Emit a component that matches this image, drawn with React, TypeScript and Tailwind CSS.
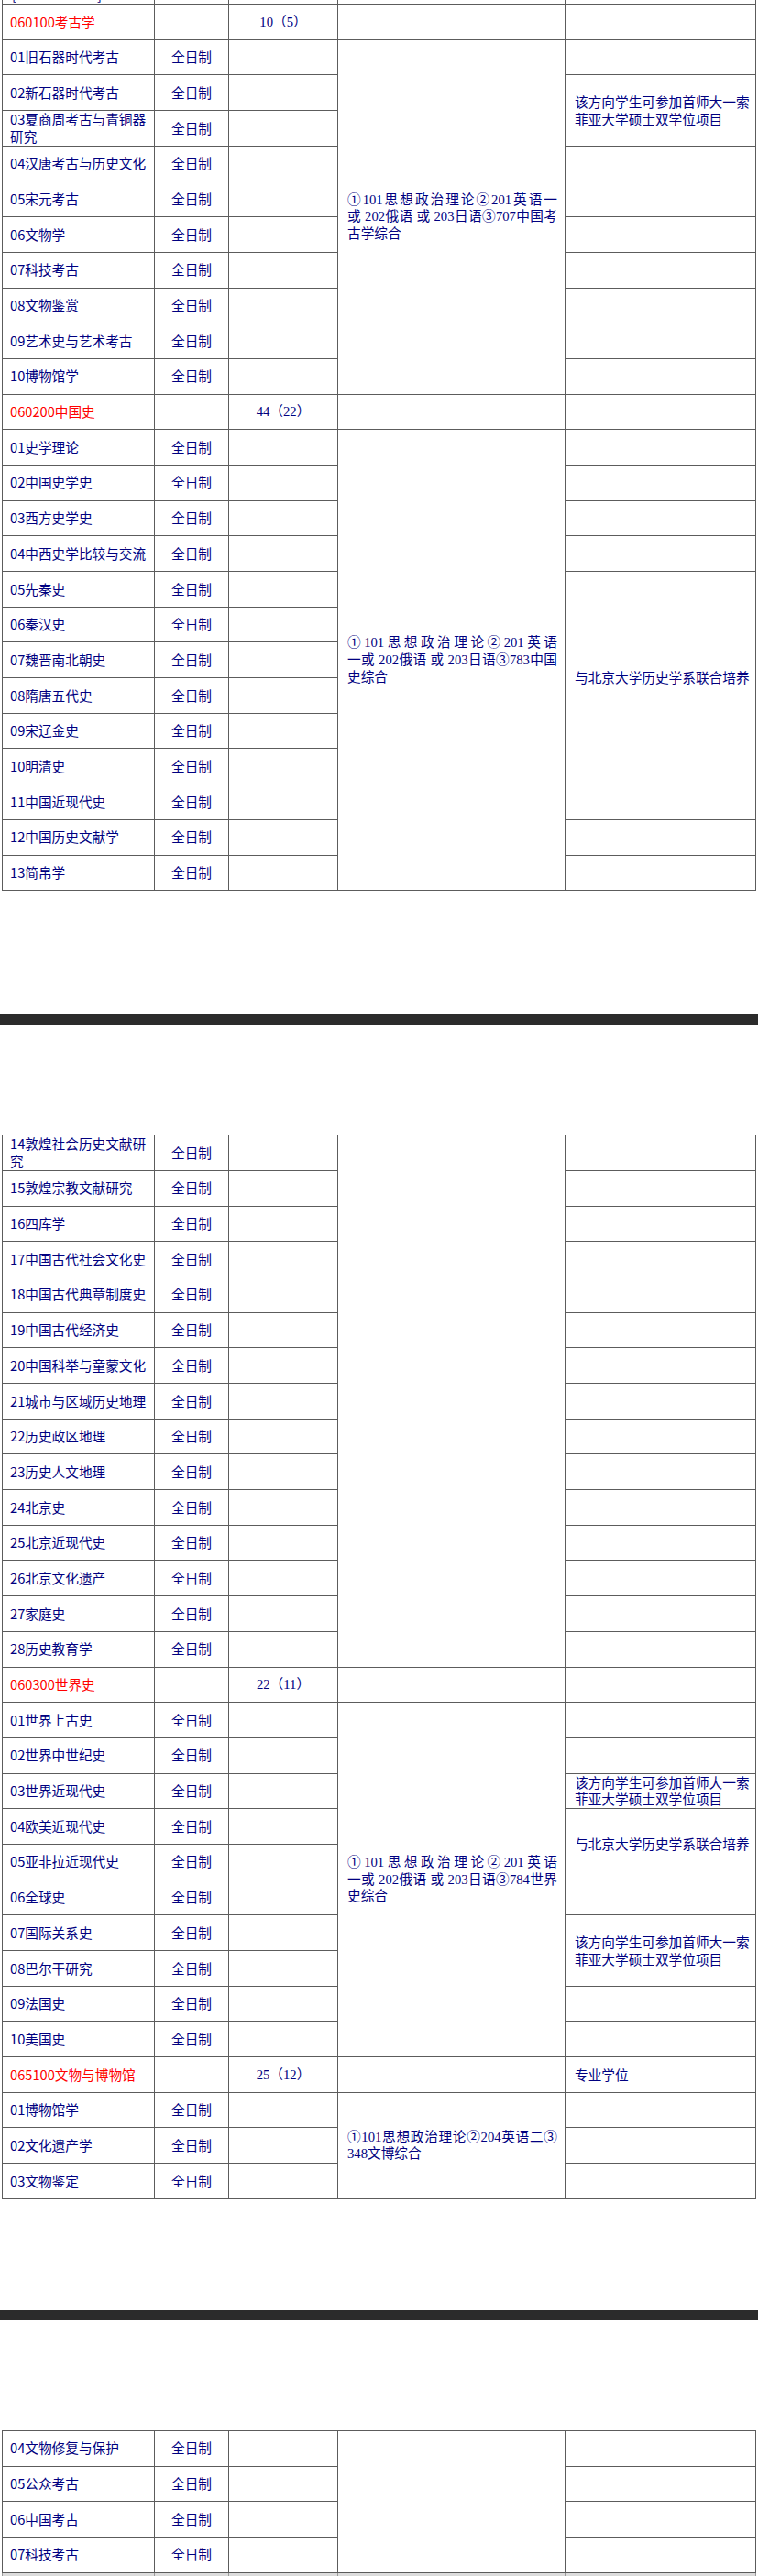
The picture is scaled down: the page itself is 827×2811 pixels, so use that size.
import React from "react";

type Seg = { span: number; text?: string; lines?: string[] };

interface Block {
  code?: string;
  quota?: string;
  remark?: string;
  subs: string[];
  exam: Seg[];
  notes: Seg[];
}

const cjk = "font-['Noto_Sans_CJK_SC',sans-serif]";
const mix = "font-['Liberation_Serif','Noto_Sans_CJK_SC',serif]";
const line = "border border-[#5c5c5c]";

const one = (n: number): Seg[] => Array.from({ length: n }, () => ({ span: 1 }));

const SOFIA = "该方向学生可参加首师大一索菲亚大学硕士双学位项目";
const PKU = "与北京大学历史学系联合培养";

function ExamText({ lines }: { lines?: string[] }) {
  if (!lines) return null;
  return (
    <div>
      {lines.map((l, i) => (
        <span
          key={i}
          className={
            i < lines.length - 1
              ? "block whitespace-nowrap text-justify [text-align-last:justify]"
              : "block whitespace-nowrap"
          }
        >
          {l}
        </span>
      ))}
    </div>
  );
}

function rowsOf(block: Block, key: string) {
  const out: React.ReactNode[] = [];
  if (block.code) {
    out.push(
      <tr key={key + "-h"} className="h-[38.7px]">
        <td className={`${line} ${cjk} pl-[8px] pr-[8px] text-[#ff0000]`}>{block.code}</td>
        <td className={line}></td>
        <td className={`${line} ${mix} text-center text-[#000080]`}>{block.quota}</td>
        <td className={line}></td>
        <td className={`${line} ${cjk} pl-[10px] pr-[5px] text-[#000080]`}>{block.remark}</td>
      </tr>
    );
  }

  // map row index -> segment starting there
  const startAt = (segs: Seg[]) => {
    const m = new Map<number, Seg>();
    let i = 0;
    segs.forEach((s) => {
      m.set(i, s);
      i += s.span;
    });
    return m;
  };
  const exams = startAt(block.exam);
  const notes = startAt(block.notes);

  block.subs.forEach((name, i) => {
    const ex = exams.get(i);
    const nt = notes.get(i);
    out.push(
      <tr key={key + i} className="h-[38.7px]">
        <td className={`${line} ${cjk} pl-[8px] pr-[8px] text-[#000080]`}>{name}</td>
        <td className={`${line} ${cjk} text-center text-[#000080]`}>全日制</td>
        <td className={line}></td>
        {ex && (
          <td rowSpan={ex.span} className={`${line} ${mix} pl-[10px] pr-[8px] text-[#000080]`}>
            <ExamText lines={ex.lines} />
          </td>
        )}
        {nt && (
          <td rowSpan={nt.span} className={`${line} ${cjk} pl-[10px] pr-[5px] text-[#000080]`}>
            {nt.text}
          </td>
        )}
      </tr>
    );
  });
  return out;
}

function Sheet({ blocks, clipTop, tail }: { blocks: Block[]; clipTop?: boolean; tail?: boolean }) {
  return (
    <div className={clipTop ? "overflow-hidden" : ""}>
      <table
        className={`ml-[2px] w-[822px] table-fixed border-collapse text-[14.67px] leading-[18.6px] ${
          clipTop ? "-mt-[34.7px]" : ""
        }`}
      >
        <colgroup>
          <col className="w-[166px]" />
          <col className="w-[81px]" />
          <col className="w-[119px]" />
          <col className="w-[248px]" />
          <col className="w-[208px]" />
        </colgroup>
        <tbody>
          {clipTop && (
            <tr className="h-[38.7px]">
              <td className={`${line} ${cjk} pl-[10px] align-bottom text-[#000080]`}>
                <span className="flex w-[98px] justify-between">
                  <span>[</span>
                  <span>]</span>
                </span>
              </td>
              <td className={line}></td>
              <td className={line}></td>
              <td className={line}></td>
              <td className={line}></td>
            </tr>
          )}
          {blocks.map((b, i) => rowsOf(b, "b" + i))}
          {tail && (
            <tr className="h-[38.7px] bg-[#dcdcdc]">
              <td className="border border-[#9a9a9a]"></td>
              <td className="border border-[#9a9a9a]"></td>
              <td className="border border-[#9a9a9a]"></td>
              <td className="border border-[#9a9a9a]"></td>
              <td className="border border-[#9a9a9a]"></td>
            </tr>
          )}
        </tbody>
      </table>
    </div>
  );
}

const page1: Block[] = [
  {
    code: "060100考古学",
    quota: "10（5）",
    subs: [
      "01旧石器时代考古",
      "02新石器时代考古",
      "03夏商周考古与青铜器研究",
      "04汉唐考古与历史文化",
      "05宋元考古",
      "06文物学",
      "07科技考古",
      "08文物鉴赏",
      "09艺术史与艺术考古",
      "10博物馆学",
    ],
    exam: [
      {
        span: 10,
        lines: ["①101思想政治理论②201英语一", "或 202俄语 或 203日语③707中国考", "古学综合"],
      },
    ],
    notes: [{ span: 1 }, { span: 2, text: SOFIA }, ...one(7)],
  },
  {
    code: "060200中国史",
    quota: "44（22）",
    subs: [
      "01史学理论",
      "02中国史学史",
      "03西方史学史",
      "04中西史学比较与交流",
      "05先秦史",
      "06秦汉史",
      "07魏晋南北朝史",
      "08隋唐五代史",
      "09宋辽金史",
      "10明清史",
      "11中国近现代史",
      "12中国历史文献学",
      "13简帛学",
    ],
    exam: [
      {
        span: 13,
        lines: ["①101思想政治理论②201英语", "一或 202俄语 或 203日语③783中国", "史综合"],
      },
    ],
    notes: [...one(4), { span: 6, text: PKU }, ...one(3)],
  },
];

const page2: Block[] = [
  {
    subs: [
      "14敦煌社会历史文献研究",
      "15敦煌宗教文献研究",
      "16四库学",
      "17中国古代社会文化史",
      "18中国古代典章制度史",
      "19中国古代经济史",
      "20中国科举与童蒙文化",
      "21城市与区域历史地理",
      "22历史政区地理",
      "23历史人文地理",
      "24北京史",
      "25北京近现代史",
      "26北京文化遗产",
      "27家庭史",
      "28历史教育学",
    ],
    exam: [{ span: 15 }],
    notes: one(15),
  },
  {
    code: "060300世界史",
    quota: "22（11）",
    subs: [
      "01世界上古史",
      "02世界中世纪史",
      "03世界近现代史",
      "04欧美近现代史",
      "05亚非拉近现代史",
      "06全球史",
      "07国际关系史",
      "08巴尔干研究",
      "09法国史",
      "10美国史",
    ],
    exam: [
      {
        span: 10,
        lines: ["①101思想政治理论②201英语", "一或 202俄语 或 203日语③784世界", "史综合"],
      },
    ],
    notes: [...one(2), { span: 1, text: SOFIA }, { span: 2, text: PKU }, { span: 1 }, { span: 2, text: SOFIA }, ...one(2)],
  },
  {
    code: "065100文物与博物馆",
    quota: "25（12）",
    remark: "专业学位",
    subs: ["01博物馆学", "02文化遗产学", "03文物鉴定"],
    exam: [{ span: 3, lines: ["①101思想政治理论②204英语二③", "348文博综合"] }],
    notes: one(3),
  },
];

const page3: Block[] = [
  {
    subs: ["04文物修复与保护", "05公众考古", "06中国考古", "07科技考古"],
    exam: [{ span: 4 }],
    notes: one(4),
  },
];

export default function App() {
  return (
    <div className="h-[2811px] w-[827px] overflow-hidden bg-white">
      <Sheet blocks={page1} clipTop />
      <div className="mt-[135px] h-[11px] bg-[#2b2b2b]" />
      <div className="mt-[120px]">
        <Sheet blocks={page2} />
      </div>
      <div className="mt-[121px] h-[11px] bg-[#2b2b2b]" />
      <div className="mt-[120px]">
        <Sheet blocks={page3} tail />
      </div>
    </div>
  );
}
